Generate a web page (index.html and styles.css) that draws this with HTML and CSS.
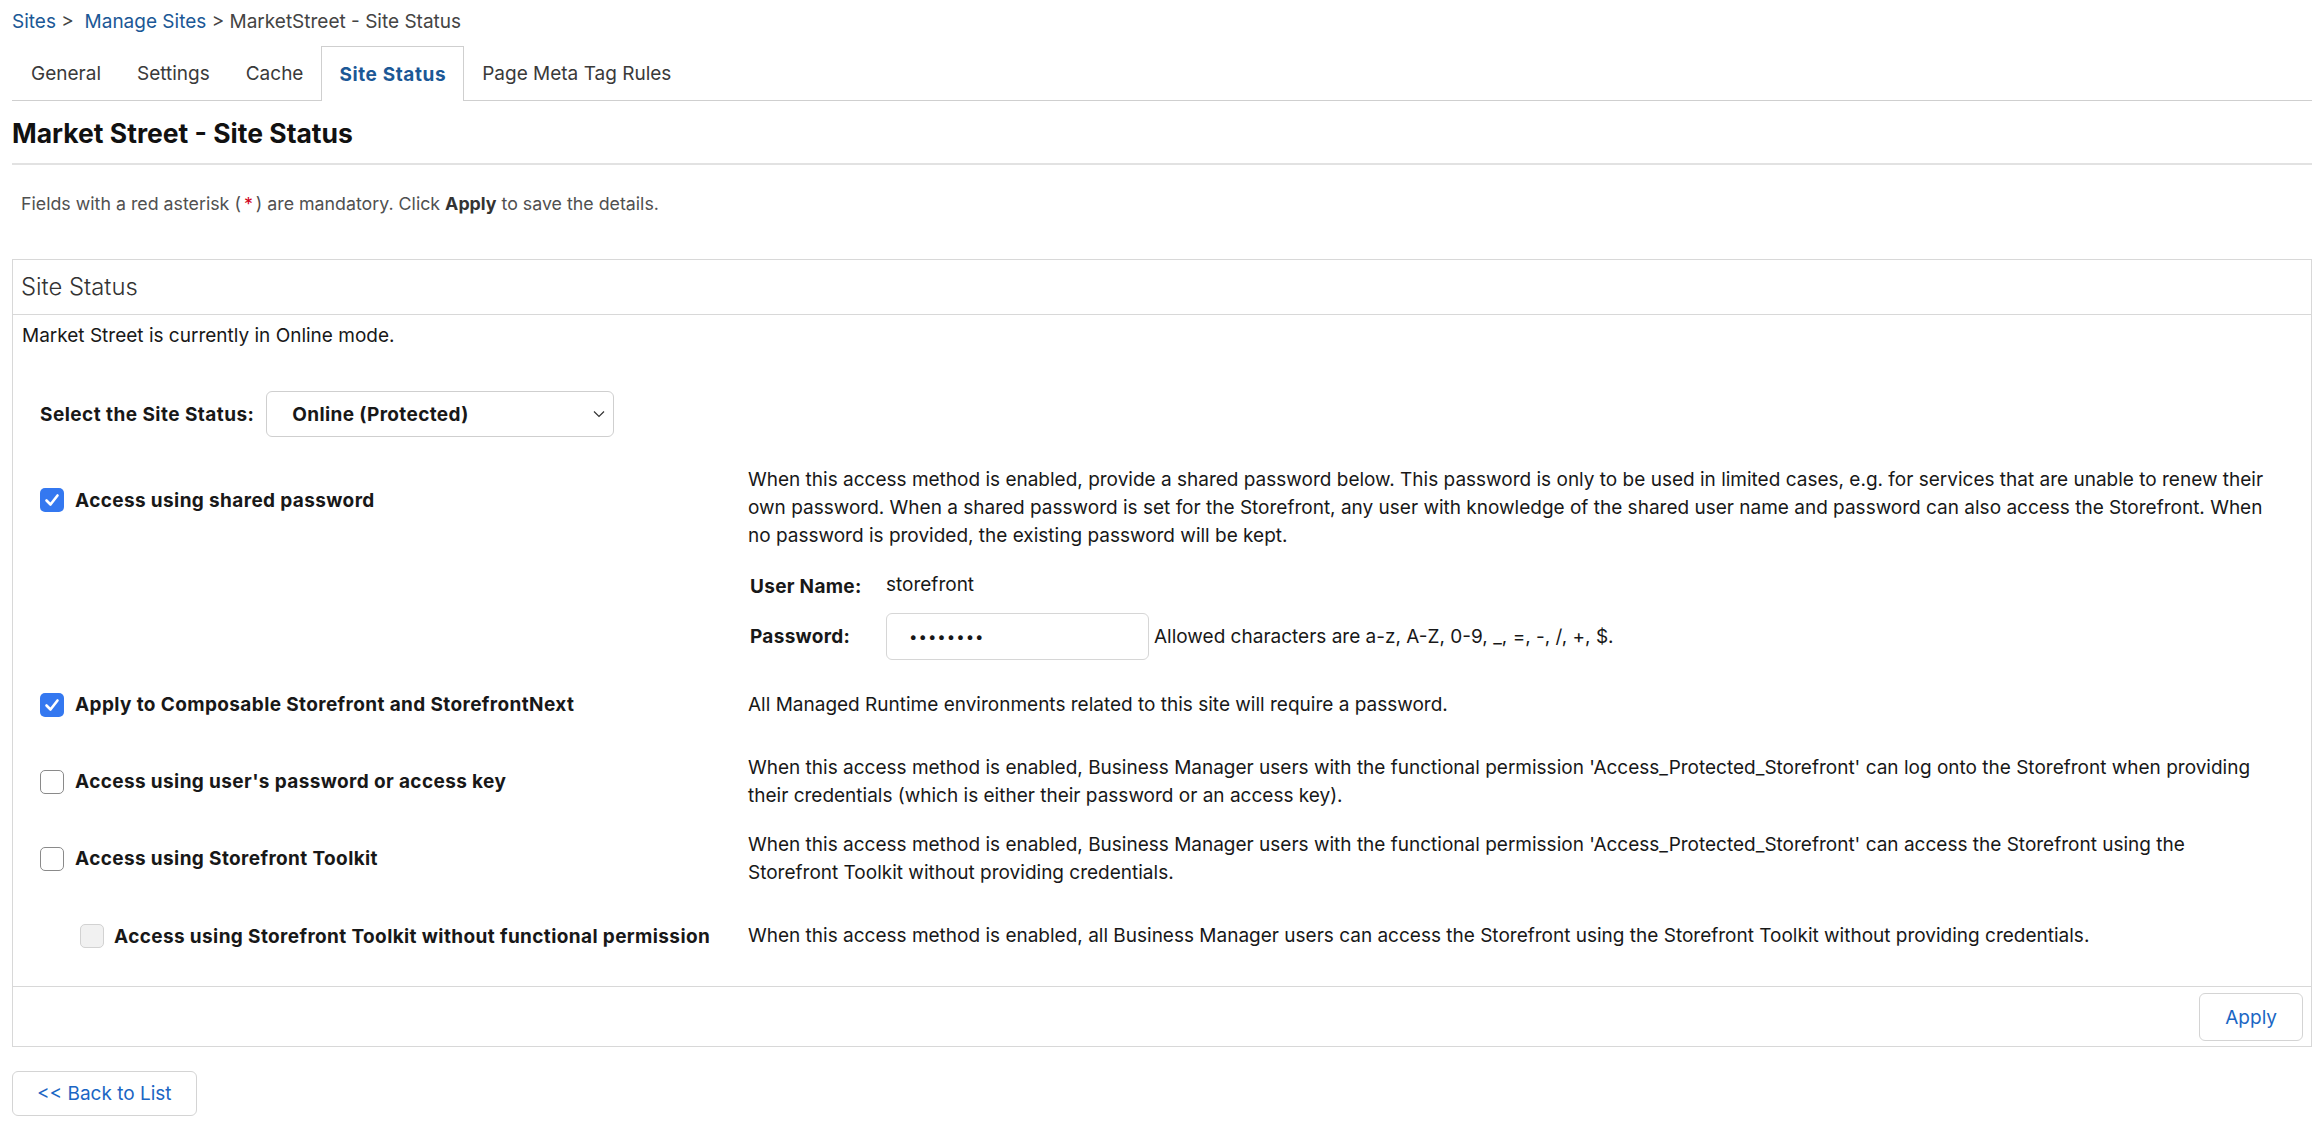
FILE: index.html
```html
<!DOCTYPE html>
<html lang="en">
<head>
<meta charset="utf-8">
<title>MarketStreet - Site Status</title>
<link rel="stylesheet" href="styles.css">
</head>
<body>
<div class="page">
  <nav class="breadcrumb">
    <a href="#" class="link">Sites</a> &gt;&nbsp; <a href="#" class="link">Manage Sites</a> &gt; MarketStreet - Site Status
  </nav>

  <div class="tabs">
    <a href="#" class="tab">General</a>
    <a href="#" class="tab">Settings</a>
    <a href="#" class="tab">Cache</a>
    <a href="#" class="tab tab-active">Site Status</a>
    <a href="#" class="tab">Page Meta Tag Rules</a>
  </div>

  <h1 class="title">Market Street - Site Status</h1>

  <p class="hint">Fields with a red asterisk (<span class="req">*</span>) are mandatory. Click <b>Apply</b> to save the details.</p>

  <section class="panel">
    <header class="panel-head">Site Status</header>
    <div class="panel-body">
      <p class="mode">Market Street is currently in Online mode.</p>

      <div class="status-row">
        <span class="field-label">Select the Site Status:</span>
        <div class="select">
          <span>Online (Protected)</span>
          <svg class="chev" width="12" height="8" viewBox="0 0 12 8"><path d="M1 1.5 L6 6.5 L11 1.5" fill="none" stroke="#333" stroke-width="1.2"/></svg>
        </div>
      </div>

      <div class="options">
        <div class="opt opt-first">
          <label class="opt-label"><span class="cb cb-on"><svg viewBox="0 0 24 24" width="24" height="24"><path d="M6.5 12.5 L10.5 16.5 L17.5 7.5" fill="none" stroke="#fff" stroke-width="2.6" stroke-linecap="round" stroke-linejoin="round"/></svg></span>Access using shared password</label>
          <p class="opt-desc opt-desc-first">When this access method is enabled, provide a shared password below. This password is only to be used in limited cases, e.g. for services that are unable to renew their own password. When a shared password is set for the Storefront, any user with knowledge of the shared user name and password can also access the Storefront. When<br>no password is provided, the existing password will be kept.</p>
        </div>

        <div class="cred">
          <div class="cred-row">
            <span class="cred-label">User Name:</span>
            <span class="cred-value">storefront</span>
          </div>
          <div class="cred-row cred-row-pw">
            <span class="cred-label">Password:</span>
            <div class="input">••••••••</div>
            <span class="cred-note">Allowed characters are a-z, A-Z, 0-9, _, =, -, /, +, $.</span>
          </div>
        </div>

        <div class="opt">
          <label class="opt-label"><span class="cb cb-on"><svg viewBox="0 0 24 24" width="24" height="24"><path d="M6.5 12.5 L10.5 16.5 L17.5 7.5" fill="none" stroke="#fff" stroke-width="2.6" stroke-linecap="round" stroke-linejoin="round"/></svg></span>Apply to Composable Storefront and StorefrontNext</label>
          <p class="opt-desc">All Managed Runtime environments related to this site will require a password.</p>
        </div>

        <div class="opt">
          <label class="opt-label"><span class="cb"></span>Access using user's password or access key</label>
          <p class="opt-desc">When this access method is enabled, Business Manager users with the functional permission 'Access_Protected_Storefront' can log onto the Storefront when providing<br>their credentials (which is either their password or an access key).</p>
        </div>

        <div class="opt">
          <label class="opt-label"><span class="cb"></span>Access using Storefront Toolkit</label>
          <p class="opt-desc">When this access method is enabled, Business Manager users with the functional permission 'Access_Protected_Storefront' can access the Storefront using the<br>Storefront Toolkit without providing credentials.</p>
        </div>

        <div class="opt opt-last">
          <label class="opt-label opt-label-sub"><span class="cb cb-off"></span>Access using Storefront Toolkit without functional permission</label>
          <p class="opt-desc">When this access method is enabled, all Business Manager users can access the Storefront using the Storefront Toolkit without providing credentials.</p>
        </div>
      </div>
    </div>
    <footer class="panel-foot">
      <button class="btn" type="button">Apply</button>
    </footer>
  </section>

  <button class="btn btn-back" type="button">&lt;&lt; Back to List</button>
</div>
</body>
</html>
```

FILE: styles.css
```css
* { box-sizing: border-box; }

html, body {
  margin: 0;
  background: #fff;
}

body {
  font-family: Inter, "Liberation Sans", Arial, sans-serif;
  font-size: 19px;
  color: #181818;
}

.page {
  padding: 0 12px;
}

.link {
  color: #1b5896;
  text-decoration: none;
}

.breadcrumb {
  height: 46px;
  line-height: 44px;
  color: #444;
  font-size: 19px;
}

.tabs {
  display: flex;
  height: 55px;
  border-bottom: 1px solid #cfcfcf;
}

.tab {
  display: flex;
  align-items: center;
  padding: 0 17px;
  color: #3a3a3a;
  text-decoration: none;
  font-size: 19px;
  border: 1px solid transparent;
  border-bottom: none;
}

.tab:first-child {
  padding-left: 18px;
}

.tab-active {
  color: #1b5896;
  font-weight: 700;
  letter-spacing: 0.6px;
  border-color: #cfcfcf;
  background: #fff;
  margin-bottom: -1px;
}

.title {
  margin: 0;
  height: 64px;
  line-height: 64px;
  font-size: 26.5px;
  font-weight: 700;
  color: #111;
  border-bottom: 2px solid #e2e2e2;
}

.hint {
  margin: 0;
  padding: 28px 9px 0;
  height: 94px;
  font-size: 17.8px;
  color: #505050;
}

.req {
  color: #d0021b;
  padding: 0 3px;
}

.hint b {
  color: #333;
}

.panel {
  border: 1.5px solid #d8d8d8;
}

.panel-head {
  height: 55px;
  line-height: 54px;
  padding: 0 8px;
  font-size: 23.8px;
  font-weight: 300;
  color: #333;
  border-bottom: 1.5px solid #d8d8d8;
}

.panel-body {
  padding: 7px 9px 11px;
  border-bottom: 1.5px solid #d8d8d8;
}

.mode {
  margin: 0;
  line-height: 28px;
}

.status-row {
  display: flex;
  align-items: center;
  gap: 12px;
  margin-top: 41px;
  padding-left: 18px;
}

.field-label {
  font-weight: 700;
  letter-spacing: 0.45px;
}

.select {
  display: flex;
  align-items: center;
  justify-content: space-between;
  width: 348px;
  height: 46px;
  padding: 0 8px 0 25px;
  border: 1.5px solid #cfcfcf;
  border-radius: 6px;
  font-weight: 700;
  letter-spacing: 0.35px;
}

.options {
  margin-top: 13px;
}

.opt {
  display: grid;
  grid-template-columns: 708px 1fr;
  align-items: center;
  min-height: 77px;
  padding-left: 18px;
}

.opt-first {
  min-height: 0;
}

.opt-last {
  min-height: 78px;
}

.opt-label {
  display: flex;
  align-items: center;
  gap: 11px;
  font-weight: 700;
  letter-spacing: 0.38px;
}

.opt-label-sub {
  padding-left: 40px;
  gap: 10px;
}

.cb {
  flex: none;
  width: 24px;
  height: 24px;
  border: 1.5px solid #8a8a8a;
  border-radius: 5px;
  background: #fff;
}

.cb-on {
  border: none;
  background: #3478f0;
}

.cb-on svg {
  display: block;
}

.cb-off {
  border-color: #d2d2d2;
  background: #f1f1f1;
}

.opt-desc {
  margin: 0;
  line-height: 28px;
  padding-right: 0;
}

.opt-desc-first {
  margin-top: 16px;
}

.cred {
  padding-left: 728px;
  margin-bottom: 6px;
}

.cred-row {
  display: grid;
  grid-template-columns: 136px auto auto 1fr;
  align-items: center;
  margin-top: 25px;
}

.cred-row-pw {
  margin-top: 15px;
}

.cred-label {
  font-weight: 700;
  letter-spacing: 0.3px;
}

.cred-value {
  margin-top: -5px;
}

.input {
  width: 263px;
  height: 47px;
  line-height: 45px;
  padding-left: 22px;
  border: 1.5px solid #d6d6d6;
  border-radius: 6px;
  letter-spacing: 1px;
  font-size: 15px;
}

.cred-note {
  padding-left: 5px;
}

.panel-foot {
  display: flex;
  justify-content: flex-end;
  padding: 6px 8px 5px;
}

.btn {
  font-family: inherit;
  font-size: 19px;
  color: #1b66c4;
  background: #fff;
  border: 1.5px solid #d4d4d4;
  border-radius: 6px;
  height: 48px;
  padding: 0 25px;
  cursor: pointer;
}

.btn-back {
  margin-top: 24px;
  height: 45px;
  padding: 0 24px;
}
```
